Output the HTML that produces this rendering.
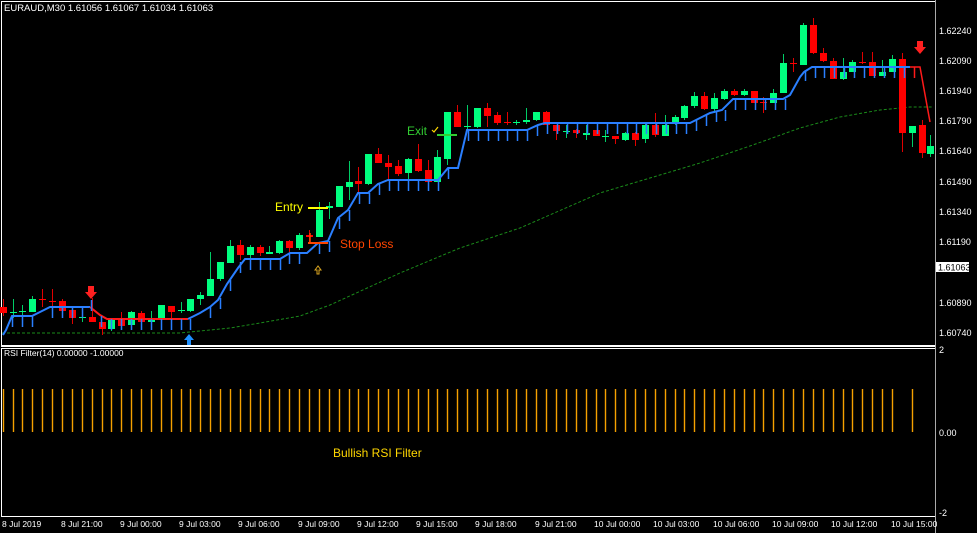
<!DOCTYPE html>
<html><head><meta charset="utf-8"><style>
html,body{margin:0;padding:0;background:#000;width:977px;height:533px;overflow:hidden}
svg{display:block}
text{font-family:"Liberation Sans",sans-serif}
</style></head><body>
<svg id="s" width="977" height="533" xmlns="http://www.w3.org/2000/svg">
<rect width="977" height="533" fill="#000"/>
<!-- frames -->
<rect x="1.5" y="1.5" width="934" height="344" fill="none" stroke="#fff" stroke-width="1"/>
<line x1="1" y1="346" x2="936" y2="346" stroke="#fff" stroke-width="2"/>
<rect x="1.5" y="348.5" width="934" height="168" fill="none" stroke="#fff" stroke-width="1"/>
<line x1="935.5" y1="0" x2="935.5" y2="533" stroke="#aaa" stroke-width="1"/>
<g id="ma"></g>
<g id="cd"></g>
<g id="bl"></g>
<g id="rsi"></g>
<!-- entry / stop / exit lines -->
<line x1="308" y1="208" x2="328" y2="208" stroke="#ffff00" stroke-width="2"/>
<line x1="308" y1="243" x2="328" y2="243" stroke="#ff4500" stroke-width="2"/>
<line x1="310" y1="233" x2="310" y2="243" stroke="#ff4500" stroke-width="1.5"/>
<line x1="437" y1="135" x2="457" y2="135" stroke="#32cd32" stroke-width="2"/>
<!-- arrows -->
<path d="M88 286h6v6h3l-6 7-6-7h3z" fill="#ff2020"/>
<path d="M917 41h6v6h3l-6 7-6-7h3z" fill="#ff2020"/>
<path d="M189 334l-5 6h3v5h4v-5h3z" fill="#1e90ff"/>
<path d="M318 266l-3 4h2v4h2v-4h2z" fill="none" stroke="#daa520" stroke-width="1"/>
<path d="M432 130l2 2 4-5" fill="none" stroke="#ffd700" stroke-width="1.2"/>
<!-- texts -->
<text x="4" y="11" font-size="9.5" fill="#fff">EURAUD,M30  1.61056 1.61067 1.61034 1.61063</text>
<text x="275" y="211" font-size="12" fill="#ffff00">Entry</text>
<text x="340" y="248" font-size="12" fill="#ff4500">Stop Loss</text>
<text x="407" y="135" font-size="12" fill="#32cd32">Exit</text>
<text x="333" y="457" font-size="12" fill="#ffd700">Bullish RSI Filter</text>
<text x="4" y="356" font-size="8.5" fill="#fff">RSI Filter(14) 0.00000 -1.00000</text>
<g font-size="9" fill="#fff">
<text x="939" y="34">1.62240</text><text x="939" y="64">1.62090</text><text x="939" y="94">1.61940</text>
<text x="939" y="124">1.61790</text><text x="939" y="154">1.61640</text><text x="939" y="185">1.61490</text>
<text x="939" y="215">1.61340</text><text x="939" y="245">1.61190</text><text x="939" y="306">1.60890</text>
<text x="939" y="336">1.60740</text>
<text x="939" y="353">2</text><text x="939" y="436">0.00</text><text x="939" y="516">-2</text>
</g>
<rect x="936" y="262" width="33" height="10" fill="#fff"/>
<text x="938" y="270.5" font-size="9" fill="#000">1.61063</text>
<g font-size="8.5" fill="#fff" id="tl">
<text x="2" y="527">8 Jul 2019</text><text x="61" y="527">8 Jul 21:00</text>
<text x="120" y="527">9 Jul 00:00</text><text x="179" y="527">9 Jul 03:00</text>
<text x="238" y="527">9 Jul 06:00</text><text x="298" y="527">9 Jul 09:00</text>
<text x="357" y="527">9 Jul 12:00</text><text x="416" y="527">9 Jul 15:00</text>
<text x="475" y="527">9 Jul 18:00</text><text x="535" y="527">9 Jul 21:00</text>
<text x="594" y="527">10 Jul 00:00</text><text x="653" y="527">10 Jul 03:00</text>
<text x="713" y="527">10 Jul 06:00</text><text x="772" y="527">10 Jul 09:00</text>
<text x="831" y="527">10 Jul 12:00</text><text x="891" y="527">10 Jul 15:00</text>
</g>
</svg>
<script>
var NS="http://www.w3.org/2000/svg";
function el(p,t,a){var e=document.createElementNS(NS,t);for(var k in a)e.setAttribute(k,a[k]);document.getElementById(p).appendChild(e);return e;}
// [top,bottom,wickTop,wickBot,color g/r]
var C=[[307,313,299,316,'r'],[312,313,299,318,'g'],[311,312,305,318,'g'],[299,312,296,312,'g'],[299,300,289,307,'r'],[301,302,289,311,'r'],[301,311,299,311,'r'],[310,318,308,324,'r'],[317,318,312,322,'g'],[317,322,298,322,'r'],
[322,329,322,335,'r'],[320,329,318,331,'g'],[319,326,312,326,'r'],[312,325,311,325,'g'],[313,322,311,322,'r'],[318,322,311,323,'g'],[305,319,305,320,'g'],[306,312,306,320,'r'],[310,311,302,313,'g'],[299,311,299,312,'g'],
[295,299,292,305,'g'],[279,296,252,296,'g'],[262,279,262,281,'g'],[246,263,240,263,'g'],[245,255,240,260,'r'],[247,255,245,258,'g'],[247,253,245,256,'r'],[252,254,246,254,'g'],[241,253,240,254,'g'],[241,248,240,252,'r'],
[235,248,233,250,'g'],[235,237,230,243,'r'],[210,237,202,237,'g'],[206,208,202,219,'g'],[186,207,186,207,'g'],[182,187,161,200,'g'],[181,184,167,193,'r'],[154,184,154,185,'g'],[154,163,148,163,'r'],[163,167,155,180,'r'],
[166,174,160,176,'r'],[159,173,158,180,'g'],[159,171,144,172,'r'],[170,182,160,184,'r'],[157,182,150,182,'g'],[112,159,112,165,'g'],[112,127,105,127,'r'],[126,127,105,130,'g'],[108,127,108,128,'g'],[108,116,103,127,'r'],
[115,123,112,125,'r'],[122,123,112,125,'r'],[122,123,120,125,'g'],[120,122,108,124,'g'],[112,120,112,121,'g'],[112,125,111,125,'r'],[125,131,125,140,'r'],[131,132,125,138,'g'],[130,133,129,138,'r'],[133,135,125,140,'g'],
[130,136,130,136,'r'],[136,137,130,142,'g'],[136,139,136,144,'r'],[133,140,132,141,'g'],[133,140,132,146,'r'],[125,139,122,143,'g'],[125,135,113,137,'r'],[125,136,115,136,'g'],[117,124,115,125,'g'],[106,118,105,120,'g'],
[96,106,92,108,'g'],[96,109,92,110,'r'],[98,109,93,113,'g'],[91,99,89,100,'g'],[91,95,89,96,'r'],[91,95,89,96,'g'],[91,103,91,103,'r'],[102,103,97,113,'r'],[93,103,89,103,'g'],[63,93,54,93,'g'],
[63,64,58,72,'r'],[25,65,23,65,'g'],[25,53,18,54,'r'],[53,61,48,62,'r'],[61,79,58,79,'r'],[72,79,58,80,'g'],[62,72,60,72,'g'],[62,63,52,64,'r'],[62,76,52,76,'r'],[72,76,60,76,'g'],
[59,72,55,72,'g'],[59,133,53,152,'r'],[126,133,126,147,'g'],[125,153,120,158,'r'],[146,154,135,157,'g']];
for(var i=0;i<C.length;i++){var c=C[i],x=Math.round(2.7+9.88*i)+0.5,col=c[4]=='g'?'#00ff7f':'#ff0000';
if(i==94)x=930.5;
el('cd','line',{x1:x,y1:c[2],x2:x,y2:c[3],stroke:c[4]=='g'?'#00cc66':'#e00000','stroke-width':1});
var h=Math.max(1,c[1]-c[0]);el('cd','rect',{x:x-3.5,y:c[0],width:7,height:h,fill:col});}
// MA
el('ma','polyline',{points:"2,333 180,333 200,331 230,328 260,323 300,316 330,305 400,273 460,248 520,228 600,193 650,178 700,163 750,146 800,128 840,117 880,110 910,107 932,107",fill:"none",stroke:"#1a8a1a","stroke-width":1,"stroke-dasharray":"3,2"});
// blue trailing
el('bl','polyline',{points:"3,335 6,330 12,316 32,316 42,311 50,307 90,307",fill:"none",stroke:"#2a7fff","stroke-width":2});
el('bl','polyline',{points:"90,307 100,315 107,319 188,319",fill:"none",stroke:"#ff1a1a","stroke-width":2});
el('bl','polyline',{points:"188,319 200,313 210,307 218,300 227,284 238,268 245,259 280,259 290,253 307,253 318,243 328,241 338,218 348,210 358,193 368,193 378,184 388,180 438,180 448,168 458,168 467,130 527,130 538,125 545,123 690,123 700,118 710,113 722,110 733,99 783,99 790,95 800,77 804,72 812,67 910,67",fill:"none",stroke:"#2a7fff","stroke-width":2});
el('bl','polyline',{points:"910,67 920,67 930,122",fill:"none",stroke:"#ff1a1a","stroke-width":1.5});
var T=[[12,316],[22,316],[32,316],[52,307],[62,307],[72,307],[82,307],[91,300],[101,316],[111,319],[121,319],[131,319],[141,319],[151,319],[161,319],[171,319],[181,319],[190,319],[210,307],[220,298],[230,280],[240,262],[250,259],[260,259],[270,259],[280,259],[289,253],[299,253],[319,243],[329,241],[339,218],[349,210],[359,193],[369,193],[379,184],[389,180],[398,180],[408,180],[418,180],[428,180],[438,180],[448,168],[468,130],[478,130],[488,130],[498,130],[507,130],[517,130],[527,130],[537,125],[547,123],[557,123],[567,123],[577,123],[587,123],[597,123],[607,123],[617,123],[627,123],[636,123],[646,123],[656,123],[666,123],[676,123],[686,123],[696,120],[706,115],[716,111],[725,110],[735,99],[745,99],[755,99],[765,99],[775,99],[785,99],[805,70],[815,67],[824,67],[834,67],[844,67],[854,67],[864,67],[874,67],[884,67],[894,67],[904,67],[914,67]];
for(var j=0;j<T.length;j++){var t=T[j];el('bl','line',{x1:t[0]+.5,y1:t[1],x2:t[0]+.5,y2:t[1]+11,stroke:t[0]>=910?'#ff1a1a':'#2a7fff','stroke-width':1.5});}
// RSI bars
for(var k=0;k<93;k++){if(k==91)continue;var xx=Math.round(2.7+9.88*k)+0.5;el('rsi','line',{x1:xx,y1:389,x2:xx,y2:432,stroke:'#f5a000','stroke-width':1.4});}
</script>
</body></html>
